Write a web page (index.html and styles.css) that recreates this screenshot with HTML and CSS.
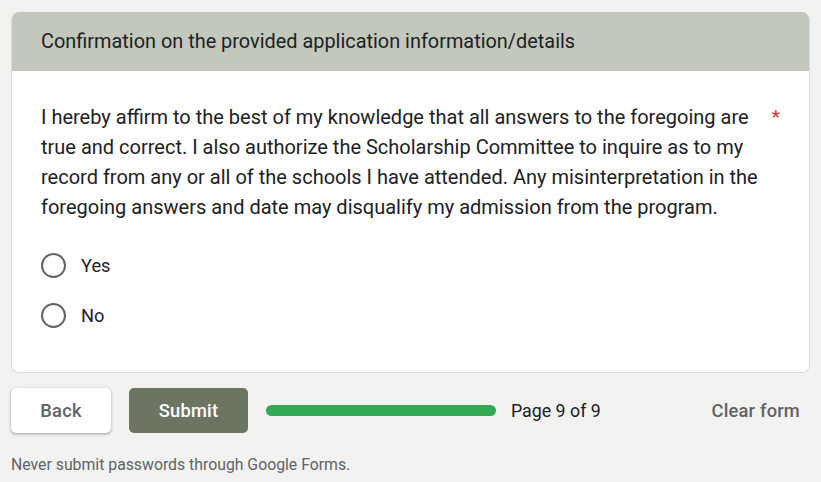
FILE: index.html
```html
<!DOCTYPE html>
<html lang="en">
<head>
  <meta charset="UTF-8">
  <meta name="viewport" content="width=device-width, initial-scale=1.0">
  <title>Scholarship Application</title>
  <link rel="stylesheet" href="styles.css">
</head>
<body>
  <div class="form-page">
    <div class="card">
      <div class="card-header">Confirmation on the provided application information/details</div>

      <div class="card-body">
        <div class="question">
          <div class="question-text">I hereby affirm to the best of my knowledge that all answers to the foregoing are true and correct. I also authorize the Scholarship Committee to inquire as to my record from any or all of the schools I have attended. Any misinterpretation in the foregoing answers and date may disqualify my admission from the program.</div>
          <span class="required">*</span>
        </div>

        <div class="options">
          <label class="option"><span class="radio"></span>Yes</label>
          <label class="option"><span class="radio"></span>No</label>
        </div>
      </div>
    </div>

    <div class="nav-row">
      <button class="btn btn-back">Back</button>
      <button class="btn btn-submit">Submit</button>
      <div class="progress"><div class="progress-fill"></div></div>
      <span class="page-count">Page 9 of 9</span>
      <button class="btn-clear">Clear form</button>
    </div>

    <p class="disclaimer">Never submit passwords through Google Forms.</p>
  </div>
</body>
</html>
```

FILE: styles.css
```css
:root {
  --page-bg: #f2f2f0;
  --header-bg: #c3c8bd;
  --accent: #6c7562;
  --progress: #34a853;
  --text: #202124;
  --muted: #5f6368;
  --required: #d93025;
}

body {
  margin: 0;
  background: var(--page-bg);
  font-family: Roboto, "Liberation Sans", Arial, sans-serif;
  color: var(--text);
}

.form-page {
  width: 799px;
  padding: 12px 11px 0;
}

.card {
  background: #fff;
  border: 1px solid #dadce0;
  border-top: none;
  border-radius: 8px;
  overflow: hidden;
}

.card-header {
  background: var(--header-bg);
  padding: 17px 29px;
  font-size: 19.9px;
  line-height: 25px;
}

.card-body {
  padding: 31px 29px 44px;
}

.question {
  display: flex;
  align-items: flex-start;
}

.question-text {
  flex: 1;
  font-size: 20px;
  line-height: 30px;
}

.required {
  color: var(--required);
  font-size: 19px;
  line-height: 30px;
  padding-left: 8px;
}

.options {
  display: flex;
  flex-direction: column;
  gap: 25px;
  margin-top: 31px;
}

.option {
  display: flex;
  align-items: center;
  gap: 15px;
  font-size: 18.3px;
  line-height: 25px;
}

.radio {
  box-sizing: border-box;
  width: 25px;
  height: 25px;
  border: 2px solid var(--muted);
  border-radius: 50%;
}

/* Navigation row under the card */
.nav-row {
  display: flex;
  align-items: center;
  margin-top: 15px;
}

.btn {
  height: 45px;
  border: none;
  border-radius: 5px;
  font-family: inherit;
  font-size: 18.3px;
  font-weight: 500;
  letter-spacing: 0.2px;
  cursor: pointer;
}

.btn-back {
  width: 100px;
  background: #fff;
  color: var(--muted);
  box-shadow: 0 1px 2px rgba(60, 64, 67, 0.3), 0 1px 3px 1px rgba(60, 64, 67, 0.15);
}

.btn-submit {
  width: 119px;
  margin-left: 18px;
  background: var(--accent);
  color: #fff;
}

.progress {
  width: 230px;
  height: 11px;
  margin-left: 18px;
  border-radius: 6px;
  background: #e0e0e0;
  overflow: hidden;
}

.progress-fill {
  width: 100%;
  height: 100%;
  background: var(--progress);
}

.page-count {
  margin-left: 15px;
  font-size: 17.8px;
}

.btn-clear {
  margin-left: auto;
  margin-right: 10px;
  padding: 0;
  border: none;
  background: none;
  color: var(--muted);
  font-family: inherit;
  font-size: 18.3px;
  font-weight: 500;
  letter-spacing: 0.2px;
  cursor: pointer;
}

.disclaimer {
  margin: 22px 0 0;
  font-size: 15.8px;
  line-height: 20px;
  color: var(--muted);
}
```
